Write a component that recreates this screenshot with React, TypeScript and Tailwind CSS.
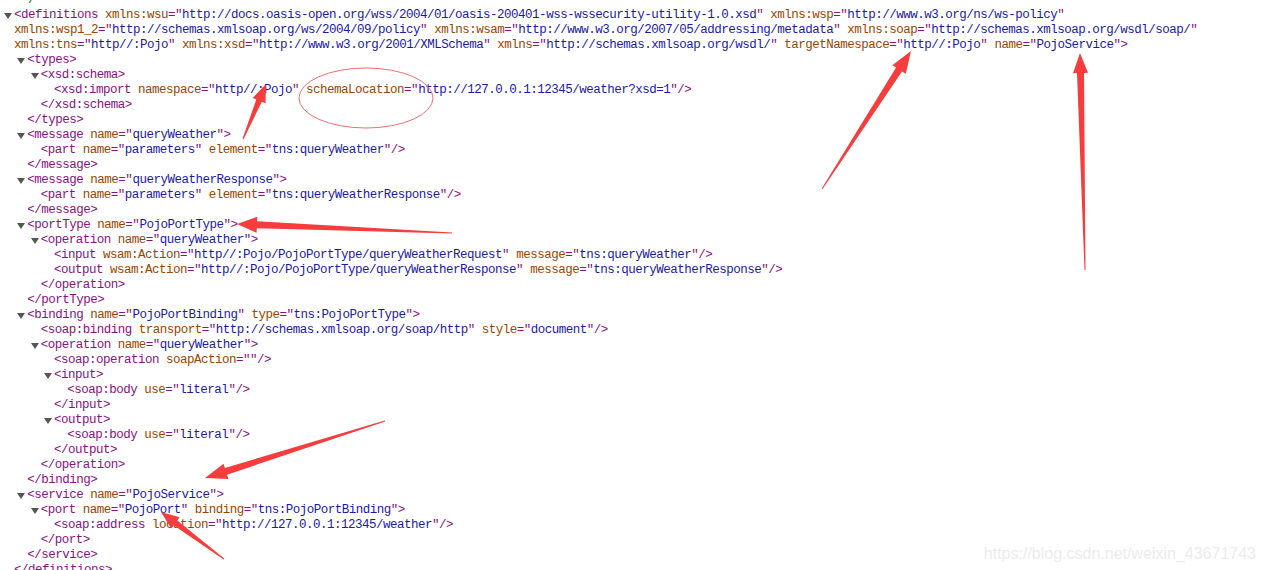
import React from "react";

type Row = { lvl: number; tri?: boolean; text: string; green?: boolean };

const rows: Row[] = [
  { lvl: 0, text: "  /", green: true },
  { lvl: 0, tri: true, text: '<definitions xmlns:wsu="http://docs.oasis-open.org/wss/2004/01/oasis-200401-wss-wssecurity-utility-1.0.xsd" xmlns:wsp="http://www.w3.org/ns/ws-policy"' },
  { lvl: 0, text: 'xmlns:wsp1_2="http://schemas.xmlsoap.org/ws/2004/09/policy" xmlns:wsam="http://www.w3.org/2007/05/addressing/metadata" xmlns:soap="http://schemas.xmlsoap.org/wsdl/soap/"' },
  { lvl: 0, text: 'xmlns:tns="http//:Pojo" xmlns:xsd="http://www.w3.org/2001/XMLSchema" xmlns="http://schemas.xmlsoap.org/wsdl/" targetNamespace="http//:Pojo" name="PojoService">' },
  { lvl: 1, tri: true, text: "<types>" },
  { lvl: 2, tri: true, text: "<xsd:schema>" },
  { lvl: 3, text: '<xsd:import namespace="http//:Pojo" schemaLocation="http://127.0.0.1:12345/weather?xsd=1"/>' },
  { lvl: 2, text: "</xsd:schema>" },
  { lvl: 1, text: "</types>" },
  { lvl: 1, tri: true, text: '<message name="queryWeather">' },
  { lvl: 2, text: '<part name="parameters" element="tns:queryWeather"/>' },
  { lvl: 1, text: "</message>" },
  { lvl: 1, tri: true, text: '<message name="queryWeatherResponse">' },
  { lvl: 2, text: '<part name="parameters" element="tns:queryWeatherResponse"/>' },
  { lvl: 1, text: "</message>" },
  { lvl: 1, tri: true, text: '<portType name="PojoPortType">' },
  { lvl: 2, tri: true, text: '<operation name="queryWeather">' },
  { lvl: 3, text: '<input wsam:Action="http//:Pojo/PojoPortType/queryWeatherRequest" message="tns:queryWeather"/>' },
  { lvl: 3, text: '<output wsam:Action="http//:Pojo/PojoPortType/queryWeatherResponse" message="tns:queryWeatherResponse"/>' },
  { lvl: 2, text: "</operation>" },
  { lvl: 1, text: "</portType>" },
  { lvl: 1, tri: true, text: '<binding name="PojoPortBinding" type="tns:PojoPortType">' },
  { lvl: 2, text: '<soap:binding transport="http://schemas.xmlsoap.org/soap/http" style="document"/>' },
  { lvl: 2, tri: true, text: '<operation name="queryWeather">' },
  { lvl: 3, text: '<soap:operation soapAction=""/>' },
  { lvl: 3, tri: true, text: "<input>" },
  { lvl: 4, text: '<soap:body use="literal"/>' },
  { lvl: 3, text: "</input>" },
  { lvl: 3, tri: true, text: "<output>" },
  { lvl: 4, text: '<soap:body use="literal"/>' },
  { lvl: 3, text: "</output>" },
  { lvl: 2, text: "</operation>" },
  { lvl: 1, text: "</binding>" },
  { lvl: 1, tri: true, text: '<service name="PojoService">' },
  { lvl: 2, tri: true, text: '<port name="PojoPort" binding="tns:PojoPortBinding">' },
  { lvl: 3, text: '<soap:address location="http://127.0.0.1:12345/weather"/>' },
  { lvl: 2, text: "</port>" },
  { lvl: 1, text: "</service>" },
  { lvl: 0, text: "</definitions>" },
];

function colorize(s: string) {
  const out: React.ReactNode[] = [];
  const re = /([\w:.\-]+)="([^"]*)"/g;
  let last = 0;
  let m: RegExpExecArray | null;
  let k = 0;
  while ((m = re.exec(s))) {
    if (m.index > last) out.push(<span key={k++} className="text-[#881280]">{s.slice(last, m.index)}</span>);
    out.push(<span key={k++} className="text-[#994500]">{m[1]}</span>);
    out.push(<span key={k++} className="text-[#881280]">="</span>);
    out.push(<span key={k++} className="text-[#1a1aa6]">{m[2]}</span>);
    out.push(<span key={k++} className="text-[#881280]">"</span>);
    last = m.index + m[0].length;
  }
  if (last < s.length) out.push(<span key={k++} className="text-[#881280]">{s.slice(last)}</span>);
  return out;
}

function arrowPoints(x1: number, y1: number, x2: number, y2: number, hl: number, hw: number, nw: number) {
  const dx = x2 - x1, dy = y2 - y1;
  const len = Math.hypot(dx, dy);
  const ux = dx / len, uy = dy / len;
  const px = -uy, py = ux;
  const nx = x2 - ux * hl, ny = y2 - uy * hl;
  const pts = [
    [x1 + px * 0.5, y1 + py * 0.5],
    [nx + px * nw / 2, ny + py * nw / 2],
    [nx + px * hw / 2, ny + py * hw / 2],
    [x2, y2],
    [nx - px * hw / 2, ny - py * hw / 2],
    [nx - px * nw / 2, ny - py * nw / 2],
    [x1 - px * 0.5, y1 - py * 0.5],
  ];
  return pts.map((p) => p[0].toFixed(1) + "," + p[1].toFixed(1)).join(" ");
}

const arrows = [
  [243, 139, 266, 84, 18, 14, 6],
  [822, 189, 911, 51, 22, 16, 7],
  [1085, 270, 1080, 53, 20, 15, 7],
  [452, 233, 237, 224, 20, 16, 7],
  [385, 421, 205, 478, 22, 16, 7],
  [224, 559, 161, 512, 18, 14, 6],
];

export default function App() {
  return (
    <div className="relative w-[1266px] h-[570px] overflow-hidden bg-white">
      <div
        className="mt-[-7px] text-[12.5px] leading-[15px] tracking-[-0.5px]"
        style={{ fontFamily: '"Liberation Mono", "DejaVu Sans Mono", monospace' }}
      >
        {rows.map((r, i) => (
          <div key={i} className="flex items-center h-[15px] whitespace-pre" style={{ paddingLeft: 14 + r.lvl * 13.33 }}>
            {r.tri && (
              <span className="flex w-[10px] -ml-[10px] mt-[1px]">
                <svg width="8" height="6" viewBox="0 0 8 6">
                  <polygon points="0,0 8,0 4,6" fill="#555555" />
                </svg>
              </span>
            )}
            <span className={r.green ? "text-[#236e25]" : ""}>{r.green ? r.text : colorize(r.text)}</span>
          </div>
        ))}
      </div>

      <svg className="absolute inset-0 pointer-events-none" width="1266" height="570" viewBox="0 0 1266 570">
        <ellipse cx="366" cy="98" rx="67" ry="30" fill="none" stroke="#f07070" strokeWidth="1" />
        {arrows.map((a, i) => (
          <polygon key={i} points={arrowPoints(a[0], a[1], a[2], a[3], a[4], a[5], a[6])} fill="#f53d3d" />
        ))}
      </svg>

      <div
        className="absolute right-[10px] bottom-[7px] text-[16px] leading-[18px] text-[#ececec]"
        style={{ fontFamily: '"Liberation Sans", Arial, sans-serif' }}
      >
        https://blog.csdn.net/weixin_43671743
      </div>
    </div>
  );
}
